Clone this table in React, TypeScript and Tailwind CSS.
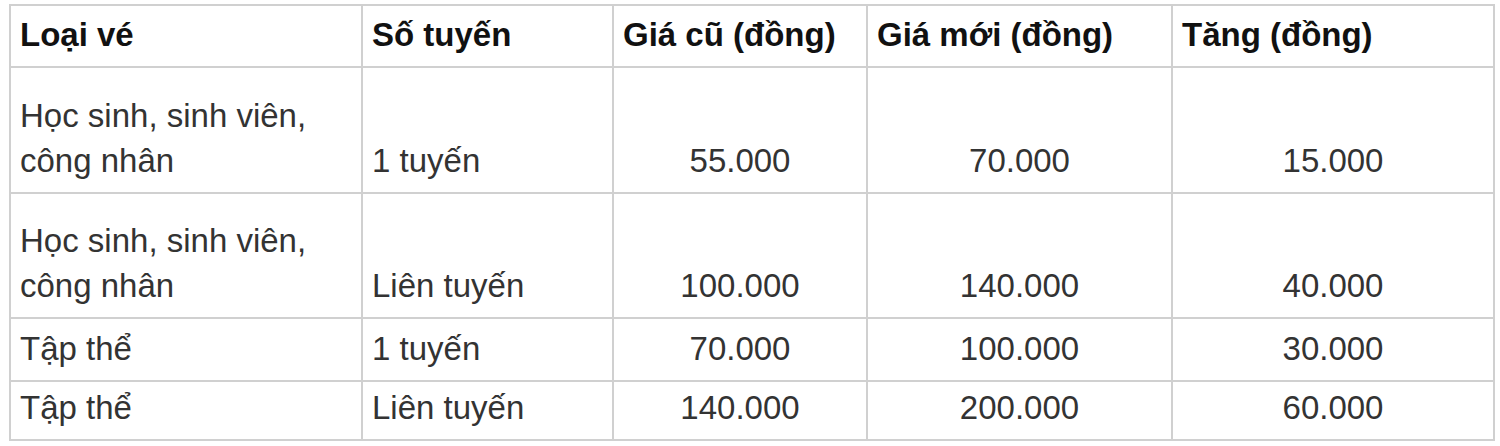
import React from 'react';

type Row = {
  type: string;
  route: string;
  oldPrice: string;
  newPrice: string;
  increase: string;
  height: string;
};

const rows: Row[] = [
  { type: 'Học sinh, sinh viên, công nhân', route: '1 tuyến', oldPrice: '55.000', newPrice: '70.000', increase: '15.000', height: 'h-[126px]' },
  { type: 'Học sinh, sinh viên, công nhân', route: 'Liên tuyến', oldPrice: '100.000', newPrice: '140.000', increase: '40.000', height: 'h-[125px]' },
  { type: 'Tập thể', route: '1 tuyến', oldPrice: '70.000', newPrice: '100.000', increase: '30.000', height: 'h-[63px]' },
  { type: 'Tập thể', route: 'Liên tuyến', oldPrice: '140.000', newPrice: '200.000', increase: '60.000', height: 'h-[59px]' },
];

const cell = 'border-2 border-[#d0d0d0] align-bottom px-[9px] pb-[9px] pt-0';

const App: React.FC = () => {
  return (
    <div className="w-[1500px] h-[446px] bg-white pl-[9px] pt-[4px] font-['Liberation_Sans',Arial,sans-serif] text-[33px] leading-[45px]">
      <table className="table-fixed border-collapse w-[1484px]">
        <colgroup>
          <col className="w-[352px]" />
          <col className="w-[251px]" />
          <col className="w-[254px]" />
          <col className="w-[305px]" />
          <col className="w-[322px]" />
        </colgroup>
        <thead>
          <tr className="h-[62px] text-left font-bold text-[#111]">
            <th className={cell}>Loại vé</th>
            <th className={cell}>Số tuyến</th>
            <th className={cell}>Giá cũ (đồng)</th>
            <th className={cell}>Giá mới (đồng)</th>
            <th className={cell}>Tăng (đồng)</th>
          </tr>
        </thead>
        <tbody className="text-[#333]">
          {rows.map((r, i) => (
            <tr key={i} className={r.height}>
              <td className={cell}>
                {r.type === 'Tập thể' ? (
                  r.type
                ) : (
                  <>
                    Học sinh, sinh viên,
                    <br />
                    công nhân
                  </>
                )}
              </td>
              <td className={cell}>{r.route}</td>
              <td className={`${cell} text-center`}>{r.oldPrice}</td>
              <td className={`${cell} text-center`}>{r.newPrice}</td>
              <td className={`${cell} text-center`}>{r.increase}</td>
            </tr>
          ))}
        </tbody>
      </table>
    </div>
  );
};

export default App;
